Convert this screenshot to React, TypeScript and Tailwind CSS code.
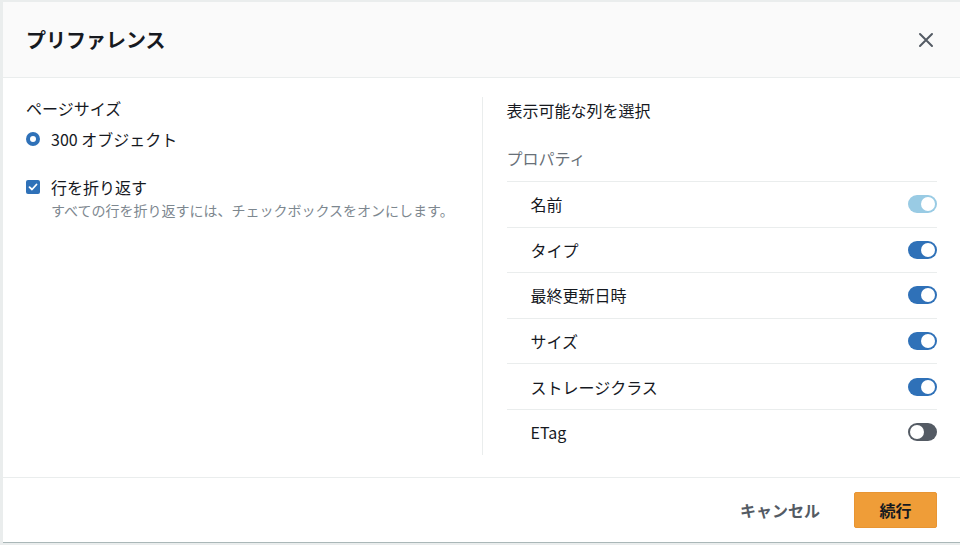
import React, { useState } from "react";

const font = { fontFamily: '"Noto Sans CJK JP", "Noto Sans", sans-serif' };

interface ColumnPref {
  id: string;
  label: string;
  visible: boolean;
  locked?: boolean;
}

const initialColumns: ColumnPref[] = [
  { id: "name", label: "名前", visible: true, locked: true },
  { id: "type", label: "タイプ", visible: true },
  { id: "modified", label: "最終更新日時", visible: true },
  { id: "size", label: "サイズ", visible: true },
  { id: "storageClass", label: "ストレージクラス", visible: true },
  { id: "etag", label: "ETag", visible: false },
];

const Toggle = ({
  checked,
  disabled,
  onChange,
}: {
  checked: boolean;
  disabled?: boolean;
  onChange: () => void;
}) => {
  const track = disabled
    ? "bg-[#99cbe4]"
    : checked
    ? "bg-[#2f71b8]"
    : "bg-[#545b64]";
  return (
    <button
      type="button"
      onClick={disabled ? undefined : onChange}
      className={`relative h-[18px] w-[29px] rounded-full ${track}`}
    >
      <span
        className={`absolute top-[2px] h-[14px] w-[14px] rounded-full bg-white ${
          checked ? "left-[13px]" : "left-[2px]"
        }`}
      />
    </button>
  );
};

export default function App() {
  const [columns, setColumns] = useState(initialColumns);
  const [wrapLines, setWrapLines] = useState(true);

  const toggleColumn = (id: string) => {
    setColumns((prev) =>
      prev.map((c) => (c.id === id ? { ...c, visible: !c.visible } : c))
    );
  };

  return (
    <div
      className="h-[545px] w-[960px] overflow-hidden bg-[#eaeded] pl-[3px] pt-[2px]"
      style={font}
    >
      <div className="flex h-[541px] w-[957px] flex-col border-b border-[#aab7b8] bg-white text-[#16191f]">
        {/* header */}
        <div className="flex h-[76px] shrink-0 items-center justify-between border-b border-[#eaeded] bg-[#fafafa] pl-[23px] pr-[26px]">
          <h2 className="text-[20px] font-bold leading-[28px]">
            プリファレンス
          </h2>
          <button type="button" className="text-[#545b64]">
            <svg width="16" height="16" viewBox="0 0 16 16">
              <path
                d="M2 2L14 14M14 2L2 14"
                stroke="currentColor"
                strokeWidth="2"
                strokeLinecap="round"
                fill="none"
              />
            </svg>
          </button>
        </div>

        {/* body */}
        <div className="grid flex-1 grid-cols-2 pb-[22px] pl-[23px] pr-[23px] pt-[19px]">
          <div className="pr-6">
            <div className="text-[16px] leading-[22px]">ページサイズ</div>
            <label className="mt-[9px] flex items-center gap-[11px]">
              <span className="flex h-[14px] w-[14px] items-center justify-center rounded-full bg-[#2f71b8]">
                <span className="h-[6px] w-[6px] rounded-full bg-white" />
              </span>
              <span className="text-[16px] leading-[22px]">
                300 オブジェクト
              </span>
            </label>

            <div className="mt-[26px] flex gap-[11px]">
              <button
                type="button"
                onClick={() => setWrapLines(!wrapLines)}
                className={`mt-[4px] flex h-[14px] w-[14px] shrink-0 items-center justify-center rounded-[2px] ${
                  wrapLines ? "bg-[#2f71b8]" : "border border-[#545b64] bg-white"
                }`}
              >
                {wrapLines && (
                  <svg width="10" height="10" viewBox="0 0 10 10">
                    <path
                      d="M1.5 5.2L4 7.5L8.5 2.5"
                      stroke="white"
                      strokeWidth="1.8"
                      fill="none"
                      strokeLinecap="round"
                      strokeLinejoin="round"
                    />
                  </svg>
                )}
              </button>
              <div>
                <div className="text-[16px] leading-[22px]">行を折り返す</div>
                <div className="mt-[2px] text-[14px] leading-[20px] text-[#7d878f]">
                  すべての行を折り返すには、チェックボックスをオンにします。
                </div>
              </div>
            </div>
          </div>

          <div className="border-l border-[#eaeded] pl-6">
            <div className="mt-[2px] text-[16px] leading-[22px]">
              表示可能な列を選択
            </div>
            <div className="mt-[26px] text-[16px] leading-[22px] text-[#687078]">
              プロパティ
            </div>
            <div className="mt-[12px]">
              {columns.map((col) => (
                <div
                  key={col.id}
                  className="flex h-[45.6px] items-center justify-between border-t border-[#eaeded] pl-6"
                >
                  <span className="text-[16px] leading-[22px]">{col.label}</span>
                  <Toggle
                    checked={col.visible}
                    disabled={col.locked}
                    onChange={() => toggleColumn(col.id)}
                  />
                </div>
              ))}
            </div>
          </div>
        </div>

        {/* footer */}
        <div className="flex h-[66px] shrink-0 items-center justify-end gap-[14px] border-t border-[#eaeded] pr-[23px]">
          <button
            type="button"
            className="px-5 text-[16px] font-bold leading-[22px] text-[#545b64]"
          >
            キャンセル
          </button>
          <button
            type="button"
            className="h-[36px] w-[83px] rounded-[2px] border border-[#e89533] bg-[#ef9d38] text-[16px] font-bold text-[#16191f]"
          >
            続行
          </button>
        </div>
      </div>
    </div>
  );
}
